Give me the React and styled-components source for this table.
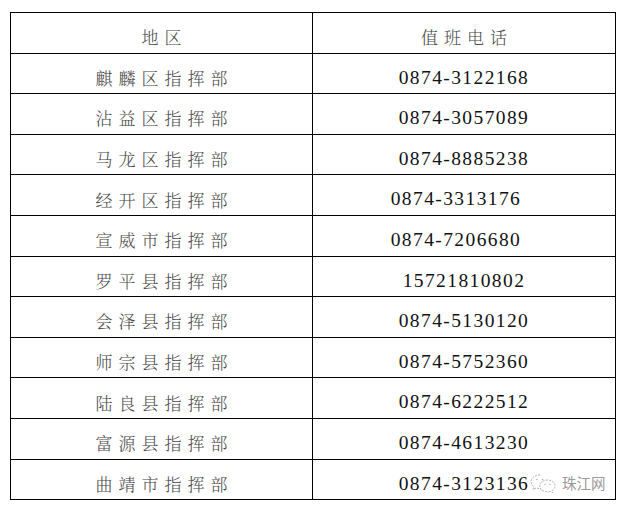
import React from 'react';
import styled, { createGlobalStyle } from 'styled-components';

const GlobalStyle = createGlobalStyle`
  html, body {
    margin: 0;
    padding: 0;
    background: #fff;
  }
`;

const Page = styled.div`
  position: relative;
  width: 627px;
  height: 511px;
  padding: 12px 0 0 10px;
  box-sizing: border-box;
`;

const Table = styled.div`
  display: grid;
  grid-template-columns: 302px 303px;
  grid-auto-rows: 40.6px;
  width: 605px;
  border-top: 1px solid #000;
  border-left: 1px solid #000;
`;

const Cell = styled.div`
  display: flex;
  align-items: center;
  justify-content: center;
  box-sizing: border-box;
  padding-top: 8px;
  border-right: 1px solid #000;
  border-bottom: 1px solid #000;
`;

const Region = styled.span`
  font-family: "Noto Serif CJK SC", "Noto Sans CJK SC", "Noto Sans", serif;
  font-size: 17px;
  font-weight: 300;
  letter-spacing: 6px;
  padding-left: 6px;
  color: #4a4a4a;
  line-height: 1;
`;

const Phone = styled.span`
  font-family: "Liberation Serif", "Times New Roman", serif;
  font-size: 19.5px;
  letter-spacing: 1.4px;
  color: #111;
  line-height: 1;
  margin-left: ${p => (p.$shift || 0) * 2}px;
`;

const Watermark = styled.div`
  position: absolute;
  left: 529px;
  top: 473px;
  display: flex;
  align-items: center;
  gap: 5px;
  font-family: "Noto Sans CJK SC", sans-serif;
  font-size: 14.5px;
  color: #999;
  line-height: 1;
`;

const rows = [
  ['麒麟区指挥部', '0874-3122168', 0],
  ['沾益区指挥部', '0874-3057089', 0],
  ['马龙区指挥部', '0874-8885238', 0],
  ['经开区指挥部', '0874-3313176', -8],
  ['宣威市指挥部', '0874-7206680', -8],
  ['罗平县指挥部', '15721810802', 0],
  ['会泽县指挥部', '0874-5130120', 0],
  ['师宗县指挥部', '0874-5752360', 0],
  ['陆良县指挥部', '0874-6222512', 0],
  ['富源县指挥部', '0874-4613230', 0],
  ['曲靖市指挥部', '0874-3123136', 0],
];

function WechatIcon() {
  return (
    <svg width="28" height="20" viewBox="0 0 28 20" fill="none" stroke="#b0b0b0" strokeWidth="1" strokeDasharray="2 1.2">
      <path d="M11 2 C5.5 2 2 5.3 2 8.8 C2 10.8 3.1 12.5 4.8 13.7 L4 16.5 L7.3 14.9 C8.4 15.3 9.7 15.5 11 15.5" />
      <path d="M18.5 7 C14 7 10.8 9.8 10.8 13 C10.8 16.2 14 18.8 18.5 18.8 C19.5 18.8 20.4 18.7 21.2 18.4 L23.8 19.6 L23.2 17.3 C24.9 16.2 26 14.7 26 13 C26 9.8 23 7 18.5 7 Z" />
      <circle cx="8" cy="6.5" r="0.8" fill="#b0b0b0" stroke="none" />
      <circle cx="13.5" cy="6.5" r="0.8" fill="#b0b0b0" stroke="none" />
      <circle cx="16" cy="11.5" r="0.7" fill="#b0b0b0" stroke="none" />
      <circle cx="21" cy="11.5" r="0.7" fill="#b0b0b0" stroke="none" />
    </svg>
  );
}

function App() {
  return (
    <Page>
      <GlobalStyle />
      <Table>
        <Cell><Region>地区</Region></Cell>
        <Cell><Region>值班电话</Region></Cell>
        {rows.map(([name, phone, shift]) => (
          <React.Fragment key={name}>
            <Cell><Region>{name}</Region></Cell>
            <Cell><Phone $shift={shift}>{phone}</Phone></Cell>
          </React.Fragment>
        ))}
      </Table>
      <Watermark>
        <WechatIcon />
        <span>珠江网</span>
      </Watermark>
    </Page>
  );
}

export default App;
